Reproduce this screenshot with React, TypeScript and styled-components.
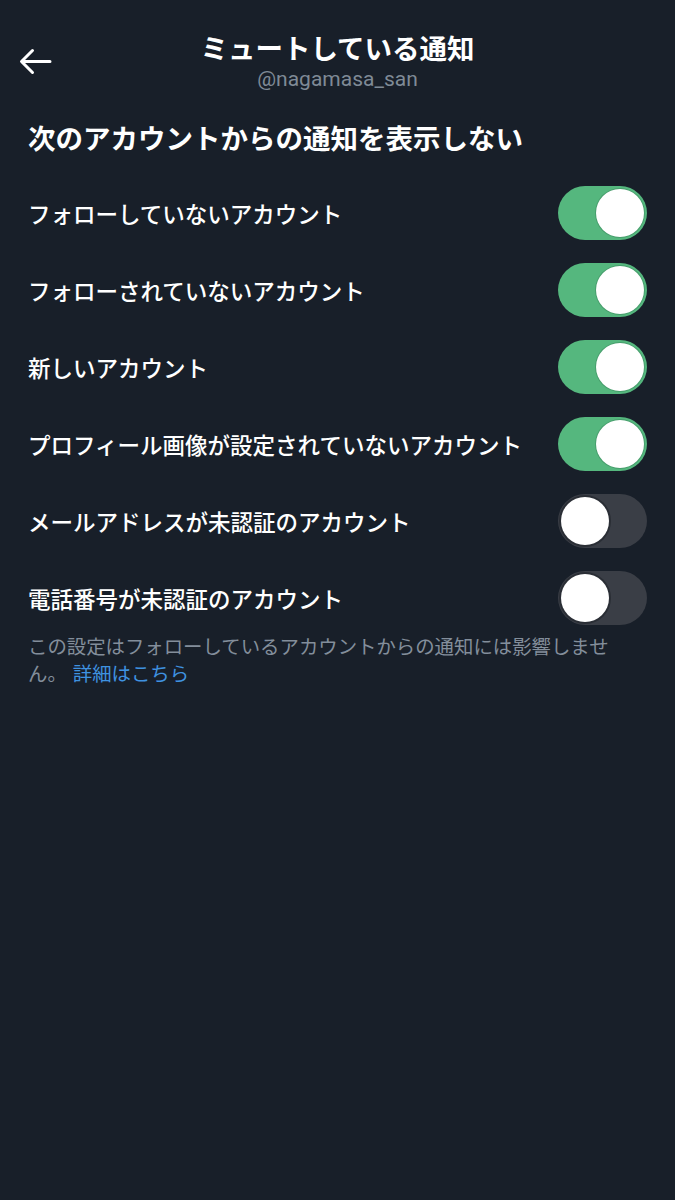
import React from "react";
import styled, { createGlobalStyle } from "styled-components";

const GlobalStyle = createGlobalStyle`
  html, body {
    margin: 0;
    padding: 0;
    background: #181f29;
  }
  body {
    font-family: "Noto Sans CJK JP", "Noto Sans", sans-serif;
    color: #ffffff;
  }
`;

const Page = styled.div`
  width: 675px;
  min-height: 1200px;
  background: #181f29;
  box-sizing: border-box;
`;

const Header = styled.header`
  display: grid;
  grid-template-columns: 70px 1fr 70px;
  align-items: center;
  padding-top: 31px;
`;

const BackButton = styled.button`
  display: flex;
  align-items: center;
  justify-content: flex-start;
  padding: 0 0 0 18px;
  margin: 0;
  margin-top: -4px;
  border: none;
  background: transparent;
  color: #ffffff;
  cursor: pointer;
`;

const TitleBlock = styled.div`
  display: flex;
  flex-direction: column;
  align-items: center;
`;

const Title = styled.h1`
  margin: 0;
  font-size: 27.5px;
  line-height: 32px;
  font-weight: 700;
  color: #ffffff;
`;

const Subtitle = styled.div`
  font-family: Roboto, "Noto Sans", sans-serif;
  font-size: 21px;
  line-height: 32px;
  color: #7f8a96;
`;

const Content = styled.main`
  padding: 24px 28px 0 28px;
`;

const SectionHeading = styled.h2`
  margin: 0 0 19px 0;
  font-size: 27.5px;
  line-height: 36px;
  font-weight: 700;
  color: #ffffff;
`;

const List = styled.div`
  display: flex;
  flex-direction: column;
`;

const Row = styled.div`
  display: flex;
  align-items: center;
  justify-content: space-between;
  height: 77px;
`;

const RowLabel = styled.span`
  font-size: 22.5px;
  line-height: 30px;
  font-weight: 500;
  color: #ffffff;
`;

const Track = styled.div<{ $on: boolean }>`
  position: relative;
  flex: none;
  width: 89px;
  height: 54px;
  border-radius: 27px;
  background: ${(p) => (p.$on ? "#55b77e" : "#3a3e46")};
  display: flex;
  align-items: center;
  justify-content: ${(p) => (p.$on ? "flex-end" : "flex-start")};
  padding: 0 3px;
  box-sizing: border-box;
`;

const Knob = styled.div<{ $on: boolean }>`
  width: 48px;
  height: 48px;
  border-radius: 50%;
  background: #ffffff;
  box-shadow: ${(p) =>
    p.$on ? "0 0 0 1px rgba(60,140,95,0.6)" : "0 0 0 2px #2a2e35"};
`;

const Note = styled.p`
  margin: -4px 0 0 0;
  font-size: 19.4px;
  line-height: 27px;
  font-weight: 400;
  color: #838e9b;
`;

const Link = styled.a`
  display: inline-block;
  color: #3f92e0;
  text-decoration: none;
  margin-left: 6px;
  line-height: 27px;
`;

const items: { label: string; on: boolean }[] = [
  { label: "フォローしていないアカウント", on: true },
  { label: "フォローされていないアカウント", on: true },
  { label: "新しいアカウント", on: true },
  { label: "プロフィール画像が設定されていないアカウント", on: true },
  { label: "メールアドレスが未認証のアカウント", on: false },
  { label: "電話番号が未認証のアカウント", on: false },
];

const Toggle: React.FC<{ on: boolean }> = ({ on }) => (
  <Track $on={on} role="switch" aria-checked={on}>
    <Knob $on={on} />
  </Track>
);

export default function App() {
  return (
    <>
      <GlobalStyle />
      <Page>
        <Header>
          <BackButton aria-label="戻る">
            <svg width="34" height="28" viewBox="0 0 34 28" fill="none">
              <path
                d="M32 14.5 H4.5 M14.5 3.5 L3.5 14.5 L14.5 25.5"
                stroke="#ffffff"
                strokeWidth="3"
                strokeLinecap="round"
                strokeLinejoin="round"
              />
            </svg>
          </BackButton>
          <TitleBlock>
            <Title>ミュートしている通知</Title>
            <Subtitle>@nagamasa_san</Subtitle>
          </TitleBlock>
          <div />
        </Header>
        <Content>
          <SectionHeading>次のアカウントからの通知を表示しない</SectionHeading>
          <List>
            {items.map((it) => (
              <Row key={it.label}>
                <RowLabel>{it.label}</RowLabel>
                <Toggle on={it.on} />
              </Row>
            ))}
          </List>
          <Note>
            この設定はフォローしているアカウントからの通知には影響しません。
            <Link href="#">詳細はこちら</Link>
          </Note>
        </Content>
      </Page>
    </>
  );
}
